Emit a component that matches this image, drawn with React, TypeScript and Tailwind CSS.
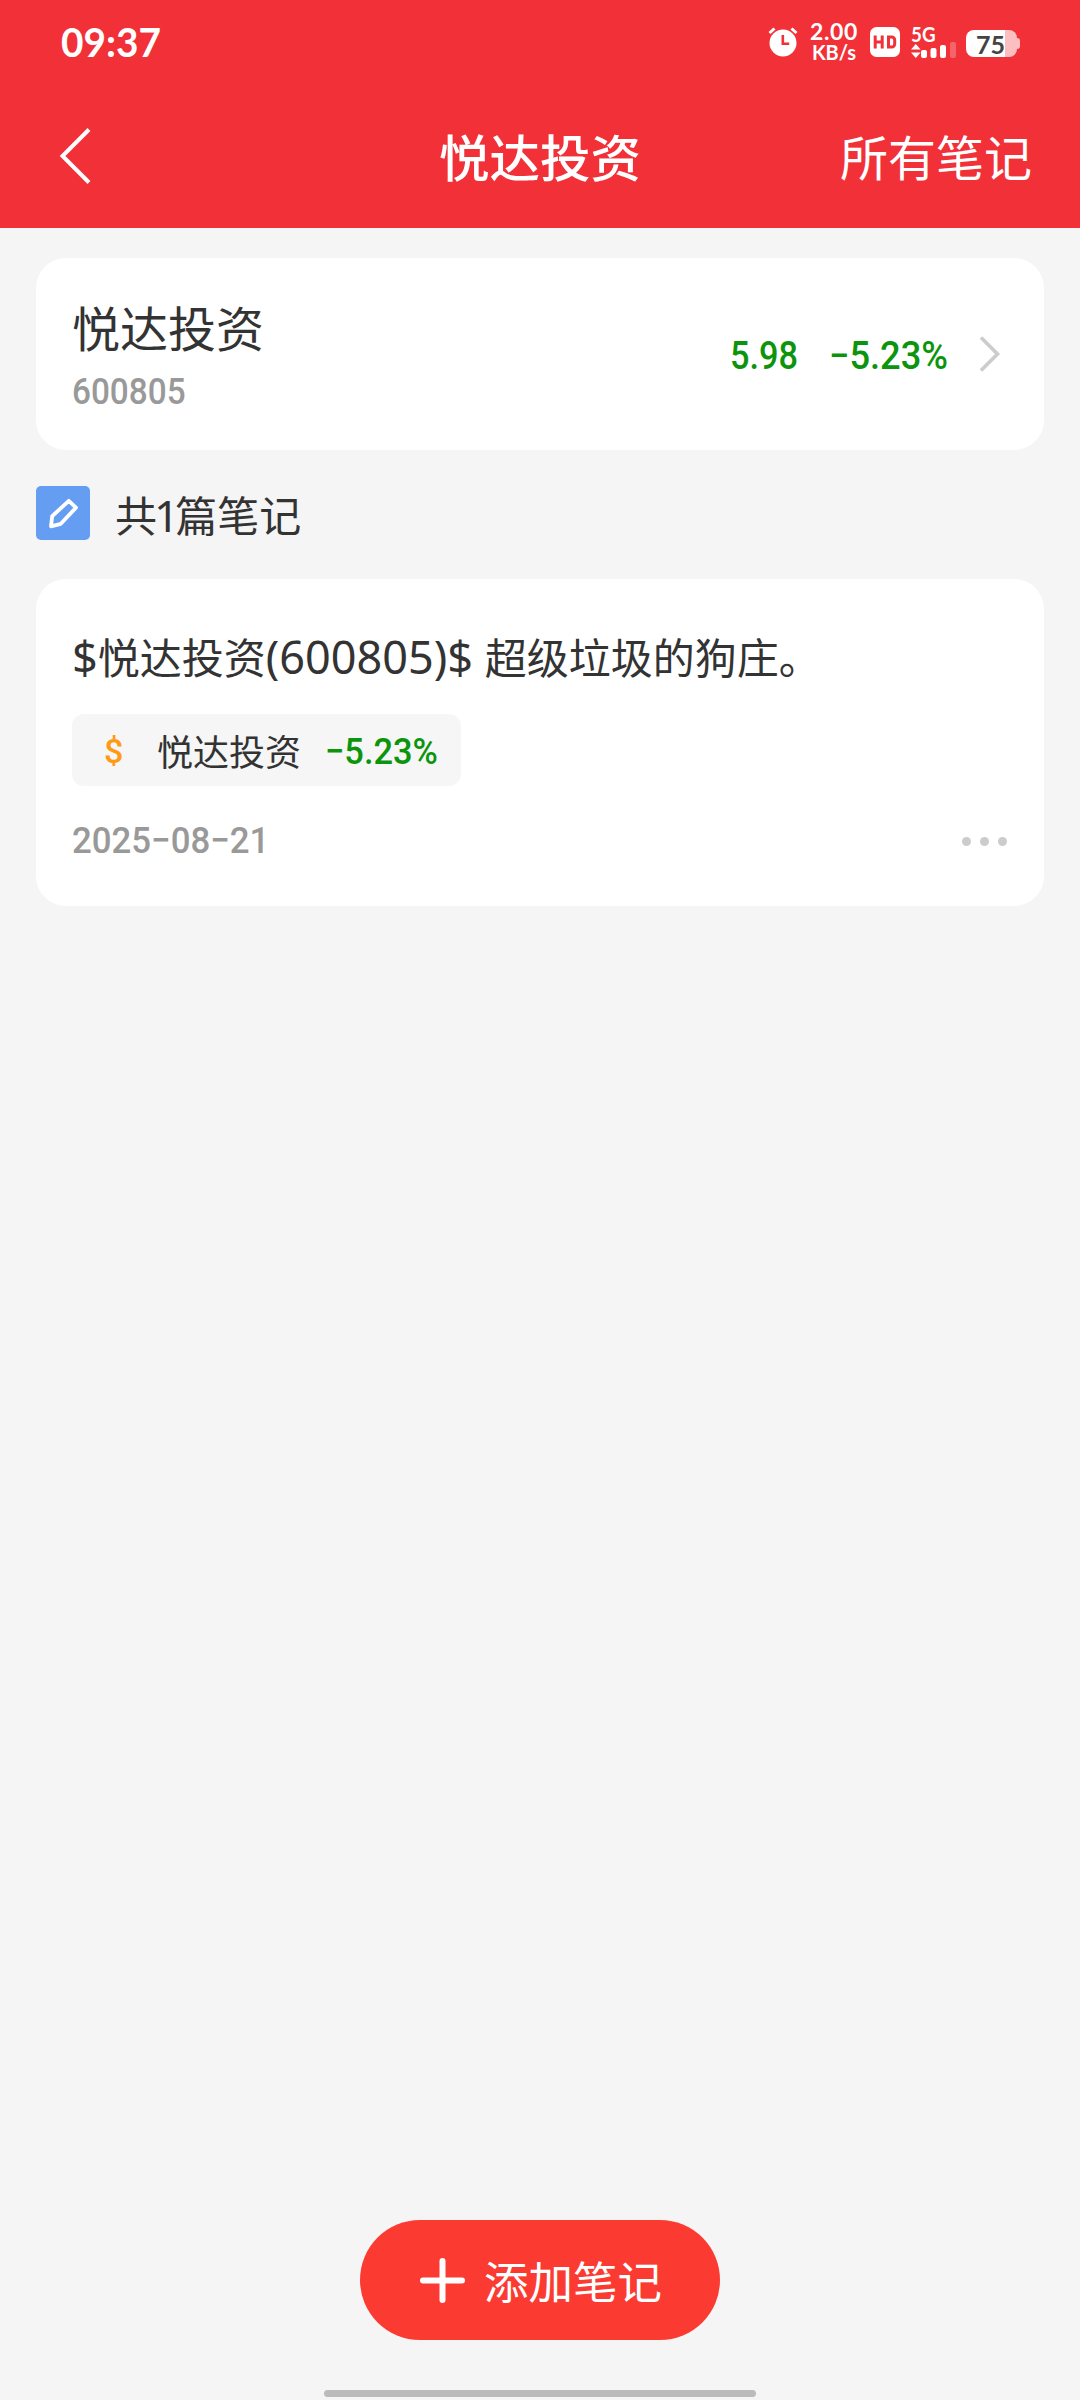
import type { ReactNode } from 'react'

interface Note {
  id: number
  text: ReactNode
  stockName: string
  change: string
  date: string
}

const stock = {
  name: '悦达投资',
  code: '600805',
  price: '5.98',
  change: '−5.23%',
}

const notes: Note[] = [
  {
    id: 1,
    text: (
      <>
        <Latin>$</Latin>悦达投资<Latin>(600805)$ </Latin>超级垃圾的狗庄。
      </>
    ),
    stockName: '悦达投资',
    change: '−5.23%',
    date: '2025−08−21',
  },
]

function Latin({ children }: { children: ReactNode }) {
  return <span className="font-['Noto_Sans',sans-serif] text-[45px] font-normal">{children}</span>
}

function StatusBar() {
  return (
    <div className="flex h-[84px] items-center justify-between pl-[61px] pr-[60px] font-['Lato',sans-serif] font-bold text-white">
      <span className="origin-left scale-x-[0.97] pb-px text-[40px] leading-[48px]">09:37</span>
      <div className="flex items-center">
        <svg width="30" height="30" viewBox="0 0 30 30" className="mr-3">
          <circle cx="15" cy="16" r="13.5" fill="#fff" />
          <path d="M1.5 6 6.5 1.5M28.5 6 23.5 1.5" stroke="#fff" strokeWidth="3" />
          <path d="M14.8 8v8.8h6.4" fill="none" stroke="#f23037" strokeWidth="2.6" />
        </svg>
        <div className="mr-3 flex w-12 flex-col items-center pb-[3px]">
          <span className="text-[23px] leading-[22px] tracking-[0.6px]">2.00</span>
          <span className="text-[20px] leading-[20px]">KB/s</span>
        </div>
        <svg width="30" height="30" viewBox="0 0 30 30" className="mr-[11px]">
          <rect width="30" height="30" rx="6.5" fill="#fff" />
          <path
            d="M5.2 8.5v13M12.2 8.5v13M5.2 15h7M18.5 10h3.2a3 3 0 0 1 3 3v4a3 3 0 0 1-3 3h-3.2z"
            fill="none"
            stroke="#f23037"
            strokeWidth="3"
          />
        </svg>
        <div className="mr-[10px] flex h-[34px] w-[45px] flex-col">
          <span className="h-4 origin-left scale-x-[0.94] text-[20px] leading-[18px]">5G</span>
          <svg width="45" height="18" viewBox="0 0 45 18">
            <path d="M0 8.5 4.8 3l4.8 5.5zM0 11.5h9.6L4.8 17z" fill="#fff" />
            <rect x="10" y="9" width="6" height="8" rx="2" fill="#fff" />
            <rect x="19.5" y="7" width="6" height="10" rx="2" fill="#fff" />
            <rect x="29" y="4" width="6" height="13" rx="2" fill="#fff" />
            <rect x="39" y="1" width="6" height="16" rx="2" fill="#fff" opacity="0.25" />
          </svg>
        </div>
        <div className="mt-[3px] flex items-center">
          <div className="flex h-[27px] w-[51px] items-center justify-end rounded-[8px] bg-[linear-gradient(90deg,#fff_39px,#fbbfc2_39px)] pr-[12px] text-[25px] leading-[30px] text-[#444]">
            75
          </div>
          <div className="h-[11px] w-[3px] rounded-r-[3px] bg-[#fbbfc2]" />
        </div>
      </div>
    </div>
  )
}

function NavBar() {
  return (
    <div className="grid h-36 grid-cols-[1fr_auto_1fr] items-center px-12 text-white">
      <svg width="32" height="56" viewBox="0 0 32 56" fill="none" className="ml-[11px]">
        <path d="M30 1.5 3.5 28 30 54.5" stroke="#fff" strokeWidth="4" />
      </svg>
      <h1 className="pb-0.5 text-[50.5px] leading-[60px] font-medium">悦达投资</h1>
      <span className="justify-self-end pb-0.5 text-[48px] leading-[60px]">所有笔记</span>
    </div>
  )
}

function StockCard() {
  return (
    <section className="flex h-48 items-center justify-between rounded-[30px] bg-white pl-9 pr-[43px]">
      <div className="flex flex-col pt-2">
        <span className="h-16 text-[48px] leading-[66px]">{stock.name}</span>
        <span className="origin-left scale-x-[0.9] pt-1 font-['Roboto',sans-serif] text-[37px] leading-[62px] font-medium text-[#999]">
          {stock.code}
        </span>
      </div>
      <div className="flex items-center font-['Roboto',sans-serif] text-[39px] leading-[48px] font-medium text-[#0c950c]">
        <span className="mr-[31px] w-[68px] pt-[3px]">
          <span className="inline-block origin-left scale-x-[0.88]">{stock.price}</span>
        </span>
        <span className="mr-[31px] w-[119px] pt-[3px] whitespace-nowrap">
          <span className="inline-block origin-left scale-x-[0.93]">{stock.change}</span>
        </span>
        <svg width="22" height="36" viewBox="0 0 22 36" fill="none">
          <path d="M2 1.5 18.5 18 2 34.5" stroke="#ccc" strokeWidth="3.6" />
        </svg>
      </div>
    </section>
  )
}

function NotesHeading({ count }: { count: number }) {
  return (
    <div className="mt-9 flex h-[54px] items-center">
      <div className="flex h-[54px] w-[54px] items-center justify-center rounded-[5px] bg-[#659df3]">
        <svg width="54" height="54" viewBox="0 0 54 54" fill="none">
          <path
            d="M15 40.3 16.2 30.2 32.8 14.8 40 21.6 24.8 37.8z"
            stroke="#fff"
            strokeWidth="3.8"
            strokeLinejoin="round"
          />
        </svg>
      </div>
      <h2 className="pt-0.5 pl-[25px] text-[42px] leading-[54px]">
        共<span className="font-['Noto_Sans',sans-serif] text-[44px] -ml-[3px] tracking-[-4px]">{count}</span>篇笔记
      </h2>
    </div>
  )
}

function NoteCard({ note }: { note: Note }) {
  return (
    <article className="mt-[39px] h-[327px] rounded-[30px] bg-white px-9 pt-[47px]">
      <p className="h-[60px] text-[42px] leading-[60px] whitespace-pre">{note.text}</p>
      <div className="mt-7 flex h-[72px] w-[389px] items-center rounded-[12px] bg-[#f6f6f6] pl-8">
        <span className="w-[53px] pt-0.5 font-['Roboto',sans-serif] text-[34px] leading-[40px] font-medium text-[#ff9a14]">
          $
        </span>
        <span className="w-[168px] text-[36px] leading-[48px]">{note.stockName}</span>
        <span className="origin-left scale-x-[0.93] pt-[3px] font-['Roboto',sans-serif] text-[37px] leading-[48px] font-medium text-[#0c950c]">
          {note.change}
        </span>
      </div>
      <div className="mt-7 flex h-[54px] items-center justify-between">
        <span className="origin-left scale-x-[0.94] font-['Roboto',sans-serif] text-[37px] leading-[54px] font-medium text-[#999]">
          {note.date}
        </span>
        <div className="flex gap-[9px] pr-px">
          <i className="h-[9px] w-[9px] rounded-full bg-[#ccc]" />
          <i className="h-[9px] w-[9px] rounded-full bg-[#ccc]" />
          <i className="h-[9px] w-[9px] rounded-full bg-[#ccc]" />
        </div>
      </div>
    </article>
  )
}

export default function App() {
  return (
    <div className="flex h-[2400px] w-[1080px] flex-col bg-[#f5f5f5] font-['Noto_Sans_CJK_SC',sans-serif] text-[#333]">
      <header className="h-[228px] bg-[#f23037]">
        <StatusBar />
        <NavBar />
      </header>

      <main className="flex-1 px-9 pt-[30px]">
        <StockCard />
        <NotesHeading count={notes.length} />
        {notes.map((note) => (
          <NoteCard key={note.id} note={note} />
        ))}
      </main>

      <footer className="flex flex-col items-center">
        <button className="flex h-[120px] w-[360px] items-center rounded-full bg-[#fb3b32] pl-[60px] text-white">
          <svg width="45" height="45" viewBox="0 0 45 45" className="mr-[19px]">
            <path d="M22.5 3v39M3 22.5h39" stroke="#fff" strokeWidth="6" strokeLinecap="round" />
          </svg>
          <span className="text-[44.5px] leading-[60px]">添加笔记</span>
        </button>
        <div className="mt-[50px] mb-[3px] h-[7px] w-[432px] rounded-full bg-[#bbb]" />
      </footer>
    </div>
  )
}
